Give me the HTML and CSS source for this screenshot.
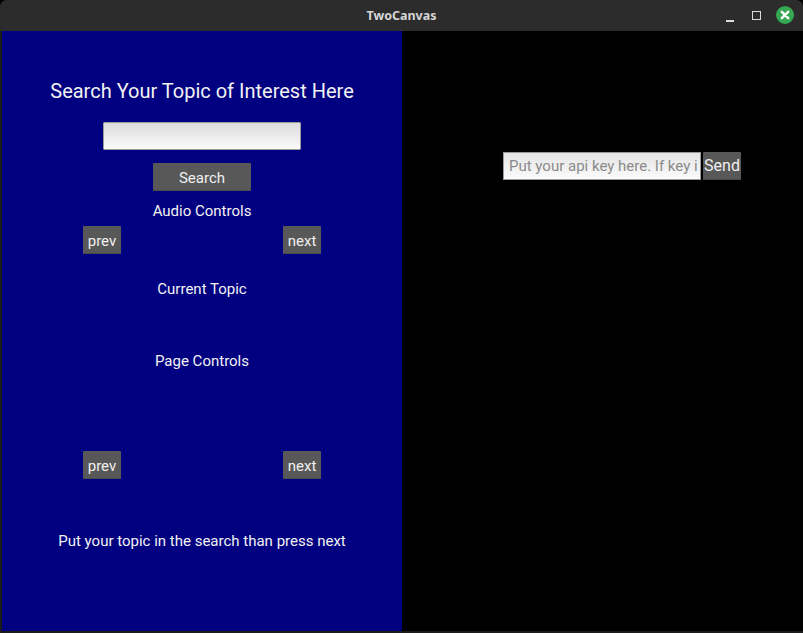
FILE: index.html
```html
<!DOCTYPE html>
<html>
<head>
<meta charset="utf-8">
<link rel="stylesheet" href="styles.css">
</head>
<body>
<div class="window">
  <div class="titlebar">
    <span class="title">TwoCanvas</span>
    <div class="controls">
      <span class="ctl min"></span>
      <span class="ctl max"></span>
      <span class="ctl close">
        <svg width="18" height="18" viewBox="0 0 18 18"><circle cx="9" cy="9" r="9" fill="#36a852"/><path d="M5.8 5.8 L12.2 12.2 M12.2 5.8 L5.8 12.2" stroke="#fff" stroke-width="2.4" stroke-linecap="round"/></svg>
      </span>
    </div>
  </div>
  <div class="content">
    <div class="left">
      <div class="heading">Search Your Topic of Interest Here</div>
      <div class="search-input"></div>
      <button class="btn search-btn">Search</button>
      <div class="label audio">Audio Controls</div>
      <div class="btn-row row-audio">
        <button class="btn small">prev</button>
        <button class="btn small">next</button>
      </div>
      <div class="label current">Current Topic</div>
      <div class="label page">Page Controls</div>
      <div class="btn-row row-page">
        <button class="btn small">prev</button>
        <button class="btn small">next</button>
      </div>
      <div class="label footer">Put your topic in the search than press next</div>
    </div>
    <div class="right">
      <div class="api-row">
        <div class="api-input"><span class="placeholder">Put your api key here. If key i</span></div>
        <button class="btn send">Send</button>
      </div>
    </div>
  </div>
</div>
</body>
</html>
```

FILE: styles.css
```css
* { box-sizing: border-box; }
html, body {
  margin: 0;
  padding: 0;
  width: 803px;
  height: 633px;
  overflow: hidden;
  background: #000;
}
.window {
  width: 803px;
  height: 633px;
  display: flex;
  flex-direction: column;
  background: #1b1b1b;
  border-radius: 7px 7px 0 0;
  overflow: hidden;
}
.titlebar {
  height: 31px;
  flex: none;
  background: #2c2c2c;
  position: relative;
  display: flex;
  align-items: center;
  justify-content: center;
}
.title {
  font-family: "Noto Sans", "DejaVu Sans", sans-serif;
  font-weight: 700;
  font-size: 12.5px;
  color: #d6d6d6;
}
.controls {
  position: absolute;
  right: 9px;
  top: 6px;
  display: flex;
  align-items: center;
}
.ctl { display: block; }
.min {
  width: 8px;
  height: 2px;
  background: #dcdcdc;
  margin-top: 12px;
  margin-right: 18px;
}
.max {
  width: 9px;
  height: 9px;
  border: 1.5px solid #dcdcdc;
  margin-top: 1px;
  margin-right: 15px;
}
.close { width: 18px; height: 18px; }
.close svg { display: block; }
.content {
  flex: 1;
  display: flex;
  padding-left: 2px;
  padding-bottom: 2px;
}
.left {
  width: 400px;
  background: #000080;
  display: flex;
  flex-direction: column;
  align-items: center;
  font-family: Roboto, "Liberation Sans", sans-serif;
  color: #f2f2f2;
  padding-top: 48px;
}
.right {
  flex: 1;
  background: #000;
  padding-top: 121px;
  padding-left: 101px;
}
.heading {
  font-size: 20px;
  line-height: 24px;
  height: 24px;
}
.search-input {
  width: 198px;
  height: 28px;
  margin-top: 19px;
  background: linear-gradient(#dcdcdc, #fbfbfb);
  border: 1px solid #9a9a9a;
  border-radius: 1px;
}
.btn {
  font-family: Roboto, "Liberation Sans", sans-serif;
  font-size: 15px;
  color: #f0f0f0;
  background: #585858;
  border: none;
  border-radius: 1px;
  padding: 2px 0 0 0;
  height: 28px;
  box-shadow: inset 0 -1px 0 #4a4a4a;
}
.search-btn {
  width: 98px;
  margin-top: 13px;
}
.label {
  font-size: 15px;
  line-height: 18px;
  height: 18px;
}
.audio { margin-top: 11px; }
.btn-row {
  width: 238px;
  display: flex;
  justify-content: space-between;
}
.row-audio { margin-top: 6px; }
.small { width: 38px; }
.current { margin-top: 26px; }
.page { margin-top: 54px; }
.row-page { margin-top: 81px; }
.footer { margin-top: 53px; }
.api-row {
  display: flex;
  gap: 2px;
}
.api-input {
  width: 198px;
  height: 28px;
  background: linear-gradient(#e4e4e4, #fbfbfb);
  border: 1px solid #9a9a9a;
  display: flex;
  align-items: center;
  padding-left: 5px;
  overflow: hidden;
  white-space: nowrap;
}
.placeholder {
  font-family: Roboto, "Liberation Sans", sans-serif;
  font-size: 15px;
  color: #8a8a8a;
}
.send {
  width: 38px;
  font-size: 16px;
  padding-top: 0;
  padding-bottom: 2px;
}
```
